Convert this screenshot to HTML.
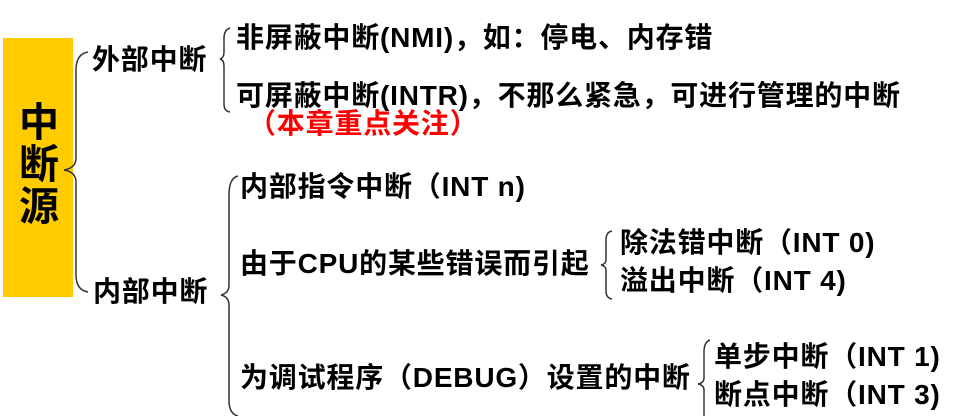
<!DOCTYPE html>
<html><head><meta charset="utf-8"><style>
body{margin:0;width:956px;height:416px;background:#fff;position:relative;overflow:hidden;font-family:"Liberation Sans","Noto Sans CJK SC",sans-serif;font-weight:bold;color:#000}
.t{position:absolute;font-size:28px;line-height:32px;white-space:nowrap;letter-spacing:0.8px}
#box{position:absolute;left:3px;top:38px;width:70px;height:259px;background:#FFCC00}
#box div{position:absolute;left:14px;top:64px;font-size:40px;line-height:42px;width:44px;text-align:center}
svg{position:absolute;left:0;top:0}
</style></head><body>
<div id="box"><div>中<br>断<br>源</div></div>
<svg width="956" height="416" fill="none" stroke="#333" stroke-width="1.5">
<path d="M88,52 Q76,54 76,70 L76,158 Q76,168 64,170 Q76,172 76,182 L76,275 Q76,290 88,292"/>
<path d="M230,28 Q224,30 224,38 L224,52 Q224,58 220,59 Q224,60 224,66 L224,104 Q224,111 230,112"/>
<path d="M238,176 Q229,178 229,195 L229,285 Q229,293 221,295 Q229,297 229,305 L229,400 Q229,414 238,416"/>
<path d="M612,231 Q606,232 606,240 L606,260 Q606,264 601,265 Q606,266 606,270 L606,291 Q606,298 612,299"/>
<path d="M710,340 Q704,342 704,352 L704,378 Q704,383 698,384 Q704,385 704,390 L704,416"/>
</svg>
<div class="t" style="left:92px;top:44px">外部中断</div>
<div class="t" style="left:93px;top:276px">内部中断</div>
<div class="t" style="left:236px;top:22px">非屏蔽中断(NMI)，如：停电、内存错</div>
<div class="t" style="left:236px;top:80px">可屏蔽中断(INTR)，不那么紧急，可进行管理的中断</div>
<div class="t" style="left:248px;top:108px;color:#f00">（本章重点关注）</div>
<div class="t" style="left:240px;top:171px">内部指令中断（INT n)</div>
<div class="t" style="left:240px;top:248px">由于CPU的某些错误而引起</div>
<div class="t" style="left:620px;top:227px">除法错中断（INT 0)</div>
<div class="t" style="left:620px;top:265px">溢出中断（INT 4)</div>
<div class="t" style="left:240px;top:362px">为调试程序（DEBUG）设置的中断</div>
<div class="t" style="left:714px;top:341px">单步中断（INT 1)</div>
<div class="t" style="left:714px;top:379px">断点中断（INT 3)</div>
</body></html>
